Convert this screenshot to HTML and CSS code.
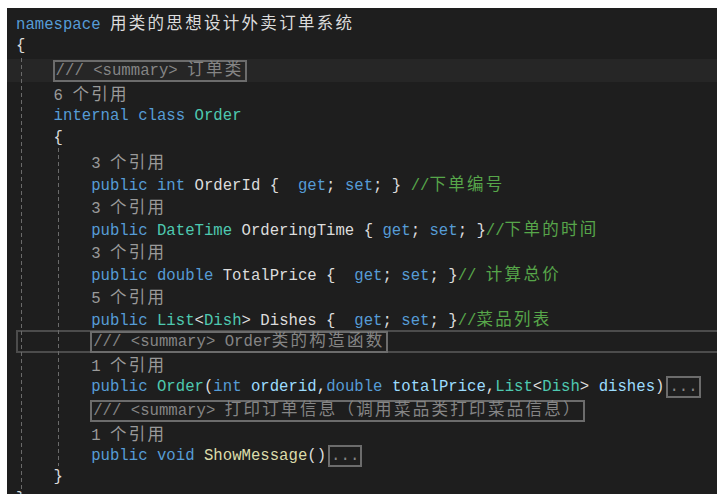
FILE: index.html
```html
<!DOCTYPE html>
<html lang="zh-CN">
<head>
<meta charset="utf-8">
<title>Order.cs</title>
<link rel="stylesheet" href="styles.css">
</head>
<body>
<div class="editor">
  <div class="guide guide-1"></div>
  <div class="guide guide-2"></div>
  <div class="code">
    <div class="line"><span class="kw">namespace</span> <span class="cn">用类的思想设计外卖订单系统</span></div>
    <div class="line open">{</div>
    <div class="line hover">    <span class="doc">/// &lt;summary&gt; <span class="cn">订单类</span></span></div>
    <div class="line lens">    6 <span class="cn">个引用</span></div>
    <div class="line">    <span class="kw">internal</span> <span class="kw">class</span> <span class="ty">Order</span></div>
    <div class="line">    {</div>
    <div class="line lens">        3 <span class="cn">个引用</span></div>
    <div class="line">        <span class="kw">public</span> <span class="kw">int</span> OrderId {  <span class="kw">get</span>; <span class="kw">set</span>; } <span class="cm">//<span class="cn">下单编号</span></span></div>
    <div class="line lens">        3 <span class="cn">个引用</span></div>
    <div class="line">        <span class="kw">public</span> <span class="ty">DateTime</span> OrderingTime { <span class="kw">get</span>; <span class="kw">set</span>; }<span class="cm">//<span class="cn">下单的时间</span></span></div>
    <div class="line lens">        3 <span class="cn">个引用</span></div>
    <div class="line">        <span class="kw">public</span> <span class="kw">double</span> TotalPrice {  <span class="kw">get</span>; <span class="kw">set</span>; }<span class="cm">// <span class="cn">计算总价</span></span></div>
    <div class="line lens">        5 <span class="cn">个引用</span></div>
    <div class="line wide">        <span class="kw">public</span> <span class="ty">List</span>&lt;<span class="ty">Dish</span>&gt; Dishes {  <span class="kw">get</span>; <span class="kw">set</span>; }<span class="cm">//<span class="cn">菜品列表</span></span></div>
    <div class="line wide cur">        <span class="doc">/// &lt;summary&gt; Order<span class="cn">类的构造函数</span></span></div>
    <div class="line lens narrow">        1 <span class="cn">个引用</span></div>
    <div class="line tall">        <span class="kw">public</span> <span class="ty">Order</span>(<span class="kw">int</span> <span class="pa">orderid</span>,<span class="kw">double</span> <span class="pa">totalPrice</span>,<span class="ty">List</span>&lt;<span class="ty">Dish</span>&gt; <span class="pa">dishes</span>)<span class="fold">...</span></div>
    <div class="line wide">        <span class="doc">/// &lt;summary&gt; <span class="cn">打印订单信息（调用菜品类打印菜品信息）</span></span></div>
    <div class="line lens">        1 <span class="cn">个引用</span></div>
    <div class="line narrow">        <span class="kw">public</span> <span class="kw">void</span> <span class="fn">ShowMessage</span>()<span class="fold">...</span></div>
    <div class="line short">    }</div>
    <div class="line narrow">}</div>
  </div>
</div>
</body>
</html>
```

FILE: styles.css
```css
html, body {
  margin: 0;
  padding: 0;
  background: #ffffff;
}

.editor {
  position: relative;
  margin: 8px 0 0 7px;
  width: 710px;
  height: 486px;
  background: #1e1e1e;
  overflow: hidden;
}

.code {
  padding-top: 3px;
  font-family: "Liberation Mono", "Noto Sans CJK SC", monospace;
  font-size: 15.67px;
  color: #dcdcdc;
}

.line {
  height: 22.5px;
  line-height: 22.5px;
  padding-left: 9px;
  white-space: pre;
}

.line.open { height: 25px; line-height: 24px; }
.line.hover { height: 23.5px; line-height: 23.5px; }
.line.wide { height: 23px; line-height: 23px; }
.line.narrow { height: 22px; line-height: 22px; }
.line.tall { height: 24px; line-height: 24px; }
.line.short { height: 21px; line-height: 21px; }

.cn {
  font-family: "Noto Sans CJK SC", sans-serif;
  font-size: 16.5px;
  letter-spacing: 2.3px;
}

.kw { color: #569cd6; }
.ty { color: #4ec9b0; }
.cm { color: #57a64a; }
.pa { color: #9cdcfe; }
.fn { color: #dcdcaa; }
.lens { color: #9a9a9a; }

.hover {
  background: #262626;
}

.cur {
  margin-left: 9px;
  padding-left: 0;
  box-shadow: inset 2px 2px 0 #4c4c4c, inset 0 -2px 0 #4c4c4c;
}

.doc {
  color: #858585;
  border: 2px solid #6c6c6c;
  padding: 0 1px;
  margin-left: -1px;
  line-height: 18px;
}

.fold {
  color: #858585;
  border: 2px solid #6c6c6c;
  margin-left: 2px;
  padding: 0 1px;
  line-height: 17px;
}

.guide {
  position: absolute;
  width: 1px;
  background: repeating-linear-gradient(to bottom, #6a6a6a 0, #6a6a6a 4px, transparent 4px, transparent 7px);
}

.guide-1 {
  left: 14px;
  top: 50px;
  bottom: 0;
}

.guide-2 {
  left: 51px;
  top: 140px;
  height: 318px;
}
```
